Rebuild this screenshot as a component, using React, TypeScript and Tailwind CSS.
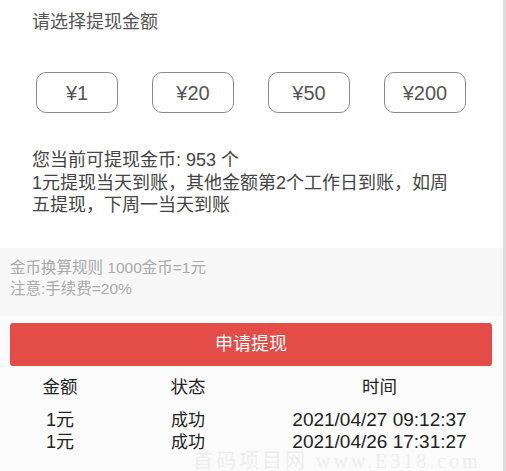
const AMOUNTS = ['¥1', '¥20', '¥50', '¥200'];

const RECORDS = [
  { amount: '1元', status: '成功', time: '2021/04/27 09:12:37' },
  { amount: '1元', status: '成功', time: '2021/04/26 17:31:27' },
];

export default function App() {
  return (
    <div
      className="flex w-[506px] h-[471px] overflow-hidden bg-white"
      style={{ fontFamily: '"Liberation Sans", "Noto Sans CJK SC", sans-serif' }}
    >
      <div className="flex flex-col w-[503px] h-full">
        {/* top: amount choice */}
        <div className="bg-white h-[248px] px-8 pt-[9px]">
          <h2 className="text-[18px] leading-[26px] text-[#555]">请选择提现金额</h2>
          <div className="flex mt-[37px] pl-1 gap-[34px]">
            {AMOUNTS.map((a) => (
              <button
                key={a}
                className="w-[82px] h-[41px] rounded-[10px] border border-[#8a8a8a] text-[20px] text-[#555] flex items-center justify-center"
              >
                {a}
              </button>
            ))}
          </div>
          <div className="mt-[36px] max-w-[425px] text-[18px] leading-[22.5px] text-[#444]">
            <p>您当前可提现金币: 953 个</p>
            <p>1元提现当天到账，其他金额第2个工作日到账，如周五提现，下周一当天到账</p>
          </div>
        </div>

        {/* rules */}
        <div className="bg-[#f7f7f7] h-[68px] px-[10px] pt-[9px] text-[15.5px] leading-[21px] text-[#aaa]">
          <p>金币换算规则 1000金币=1元</p>
          <p>注意:手续费=20%</p>
        </div>

        <div className="relative flex-1 bg-[#fbfbfb] px-[10px] pt-[7px]">
          <button className="w-[482px] h-[43px] rounded-[3px] bg-[#e34c47] text-white text-[18px]">
            申请提现
          </button>

          <div className="grid grid-cols-[100px_156px_1fr] text-center text-[#222] mt-[10px] text-[17.5px] leading-[22px]">
            <div>金额</div>
            <div>状态</div>
            <div>时间</div>
          </div>
          <div className="mt-[11px]">
            {RECORDS.map((r) => (
              <div
                key={r.time}
                className="grid grid-cols-[100px_156px_1fr] items-baseline text-center text-[#222] text-[17px] leading-[21px]"
              >
                <div className="text-[18px]">{r.amount}</div>
                <div>{r.status}</div>
                <div className="text-[19px]">{r.time}</div>
              </div>
            ))}
          </div>

          {/* watermark */}
          <div
            className="absolute left-[193px] top-[134px] whitespace-nowrap text-[20px] leading-[22px] tracking-[3px] text-[#ededed]"
            style={{ fontFamily: '"Liberation Serif", "Noto Sans CJK SC", serif' }}
          >
            首码项目网 www.E318.com
          </div>
        </div>
      </div>
      <div className="w-[3px] h-full bg-[#dcdcdc]" />
    </div>
  );
}
